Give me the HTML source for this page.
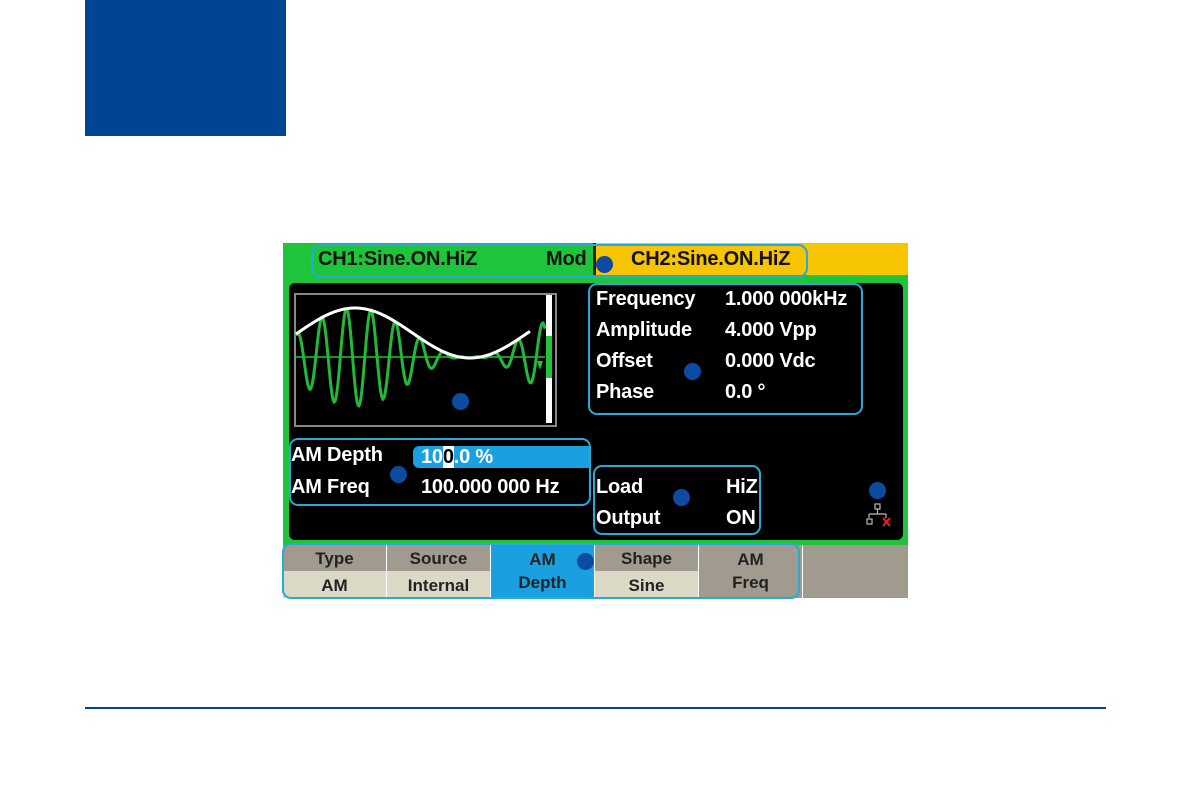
<!DOCTYPE html>
<html><head><meta charset="utf-8"><style>
body{margin:0;width:1191px;height:794px;background:#fff;position:relative;overflow:hidden;font-family:"Liberation Sans",Arial,sans-serif}
.a{position:absolute}
.t{position:absolute;color:#fff;font-size:20px;font-weight:bold;white-space:nowrap;letter-spacing:-0.2px}
.dot{position:absolute;width:17px;height:17px;border-radius:50%;background:#0d4ba3}
.ob{position:absolute;border:2px solid #2aa8d8;border-radius:9px}
.sk{position:absolute;top:545px;width:103px;height:53px;font-weight:bold;font-size:17px;text-align:center;color:#222}
.sk .u{height:26px;background:#a19b8f;line-height:27px}
.sk .l{height:27px;background:#dcd8c6;line-height:29px}
</style></head><body>
<div class="a" style="left:85px;top:0;width:201px;height:136px;background:#004494"></div>
<div class="a" style="left:85px;top:707px;width:1021px;height:2px;background:#004494"></div>

<div class="a" style="left:283px;top:243px;width:625px;height:302px;background:#1ec43a"></div>
<div class="a" style="left:595px;top:243px;width:313px;height:32px;background:#f7c400"></div>
<div class="a" style="left:593px;top:243px;width:3px;height:32px;background:#222"></div>
<div class="a" style="left:289px;top:283px;width:614px;height:257px;background:#000;border-radius:6px"></div>
<div class="t" style="left:318px;top:248px;color:#111">CH1:Sine.ON.HiZ</div>
<div class="t" style="left:546px;top:248px;color:#111">Mod</div>
<div class="t" style="left:631px;top:248px;color:#111">CH2:Sine.ON.HiZ</div>
<div class="ob" style="left:311px;top:244px;width:493px;height:30px;border-radius:10px"></div>

<div class="a" style="left:294px;top:293px;width:259px;height:130px;border:2px solid #888"></div>
<div class="a" style="left:546px;top:295px;width:6px;height:128px;background:#fff"></div>
<div class="a" style="left:546px;top:336px;width:6px;height:42px;background:#1ec43a"></div>
<svg class="a" style="left:0;top:0" width="1191" height="794">
<line x1="296" y1="357" x2="545" y2="357" stroke="#1ec43a" stroke-width="1.5"/>
<path id="g" fill="none" stroke="#22b83a" stroke-width="3"/>
<path id="w" fill="none" stroke="#fff" stroke-width="3"/>
<path d="M537 361 L543 361 L540 370 Z" fill="#1ec43a"/>
</svg>
<script>
var g="",w="";
for(var x=296;x<=545;x+=1){var yw=333-25*Math.cos(2*Math.PI*(x-355)/230);var E=357-yw;var y=357-E*Math.sin(2*Math.PI*(x-296)/24.5+1.2);g+=(x==296?"M":"L")+x+" "+y.toFixed(1)+" ";if(x<=530)w+=(x==296?"M":"L")+x+" "+yw.toFixed(1)+" ";}
document.getElementById("g").setAttribute("d",g);document.getElementById("w").setAttribute("d",w);
</script>

<div class="ob" style="left:588px;top:283px;width:271px;height:128px"></div>
<div class="t" style="left:596px;top:288px">Frequency</div><div class="t" style="left:725px;top:288px">1.000 000kHz</div>
<div class="t" style="left:596px;top:319px">Amplitude</div><div class="t" style="left:725px;top:319px">4.000 Vpp</div>
<div class="t" style="left:596px;top:350px">Offset</div><div class="t" style="left:725px;top:350px">0.000 Vdc</div>
<div class="t" style="left:596px;top:381px">Phase</div><div class="t" style="left:725px;top:381px">0.0 °</div>

<div class="a" style="left:413px;top:446px;width:176px;height:22px;background:#1aa0e0;border-radius:6px 0 0 6px"></div>
<div class="ob" style="left:289px;top:438px;width:298px;height:64px"></div>
<div class="t" style="left:291px;top:444px">AM Depth</div>
<div class="t" style="left:421px;top:446px">10<span style="background:#fff;color:#000">0</span>.0 %</div>
<div class="t" style="left:291px;top:476px">AM Freq</div><div class="t" style="left:421px;top:476px">100.000 000 Hz</div>

<div class="ob" style="left:593px;top:465px;width:164px;height:66px"></div>
<div class="t" style="left:596px;top:476px">Load</div><div class="t" style="left:726px;top:476px">HiZ</div>
<div class="t" style="left:596px;top:507px">Output</div><div class="t" style="left:726px;top:507px">ON</div>
<svg class="a" style="left:866px;top:503px" width="30" height="26"><g stroke="#bbb" fill="none" stroke-width="1.2"><rect x="9" y="1" width="5" height="5"/><path d="M11.5 6V11M3 11H20M3 11V15M20 11V15"/><rect x="1" y="16" width="5" height="5"/></g><path d="M17 15L24 23M24 15L17 23" stroke="#e22" stroke-width="2"/></svg>

<div class="sk" style="left:283px"><div class="u">Type</div><div class="l">AM</div></div>
<div class="sk" style="left:387px"><div class="u">Source</div><div class="l">Internal</div></div>
<div class="sk" style="left:491px;background:#1aa0e0;line-height:23px;padding-top:3px;height:50px">AM<br>Depth</div>
<div class="sk" style="left:595px"><div class="u">Shape</div><div class="l">Sine</div></div>
<div class="sk" style="left:699px;background:#a19b8f;line-height:23px;padding-top:3px;height:50px">AM<br>Freq</div>
<div class="sk" style="left:803px;width:105px;background:#a19b8f"></div>
<div class="ob" style="left:282px;top:543px;width:514px;height:52px"></div>

<div class="dot" style="left:596px;top:256px"></div>
<div class="dot" style="left:452px;top:393px"></div>
<div class="dot" style="left:684px;top:363px"></div>
<div class="dot" style="left:390px;top:466px"></div>
<div class="dot" style="left:673px;top:489px"></div>
<div class="dot" style="left:869px;top:482px"></div>
<div class="dot" style="left:577px;top:553px"></div>
</body></html>
